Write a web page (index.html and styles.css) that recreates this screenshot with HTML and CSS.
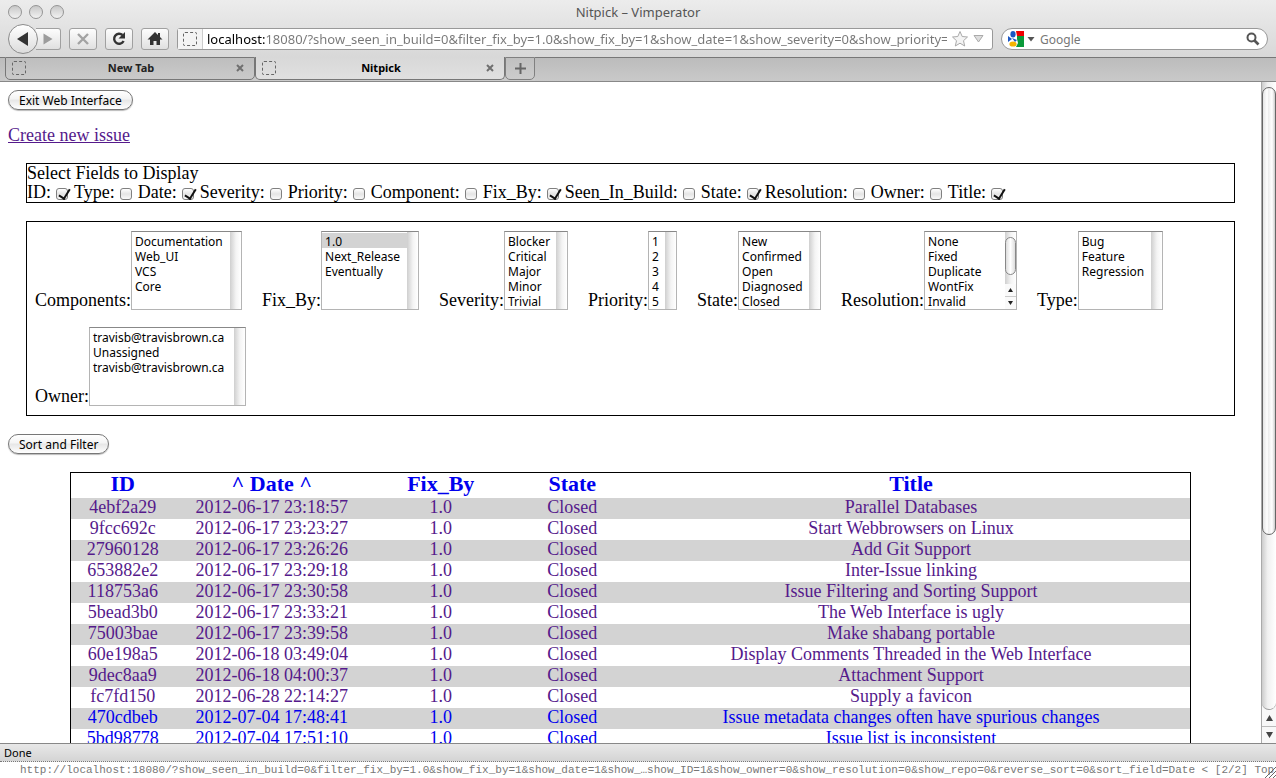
FILE: index.html
```html
<!DOCTYPE html>
<html lang="en">
<head>
<meta charset="utf-8">
<title>Nitpick</title>
<link rel="stylesheet" href="styles.css">
</head>
<body>
<header class="chrome">
  <div class="titlebar">
    <div class="lights"><span class="light"></span><span class="light"></span><span class="light"></span></div>
    <span class="window-title">Nitpick – Vimperator</span>
  </div>
  <div class="toolbar">
    <div class="history">
      <button class="back" aria-label="Back"><svg width="14" height="16" viewBox="0 0 14 16"><path d="M1 8 12 1v14z" fill="#333"/></svg></button>
      <button class="tool forward" aria-label="Forward"><svg width="10" height="12" viewBox="0 0 10 12"><path d="M9.500 6 .5 .5v11z" fill="#9c9c9c"/></svg></button>
    </div>
    <button class="tool" aria-label="Stop"><svg width="14" height="14" viewBox="0 0 14 14"><path d="M2 2 12 12M12 2 2 12" stroke="#a3a3a3" stroke-width="2.400"/></svg></button>
    <button class="tool" aria-label="Reload"><svg width="16" height="16" viewBox="0 0 16 16"><path d="M11.500 4A5 5 0 1 0 12.600 10" fill="none" stroke="#333" stroke-width="2.400"/><path d="M14 1v6.500H7.500z" fill="#333"/></svg></button>
    <button class="tool" aria-label="Home"><svg width="16" height="16" viewBox="0 0 16 16"><path d="M8 1 .5 8.500H3V14h3.500v-4h3v4H13V8.500h2.500L13 6V2h-2v2z" fill="#333"/></svg></button>
    <div class="address">
      <span class="site"><span class="favicon"></span></span>
      <input class="url" type="text" aria-label="Address" value="localhost:18080/?show_seen_in_build=0&amp;filter_fix_by=1.0&amp;show_fix_by=1&amp;show_date=1&amp;show_severity=0&amp;show_priority=0&amp;show_component=0">
      <svg width="18" height="18" viewBox="0 0 18 18"><path d="M9 1.500l2.200 5 5.300.5-4 3.700 1.200 5.300L9 13.200 4.300 16l1.200-5.300-4-3.700 5.300-.5z" fill="#f4f4f4" stroke="#aaa"/></svg>
      <svg width="11" height="8" viewBox="0 0 11 8"><path d="M1 .5h9L5.500 7z" fill="#ddd" stroke="#aaa"/></svg>
    </div>
    <div class="search">
      <svg width="17" height="16" viewBox="0 0 17 16"><path d="M8 0h8v5H9z" fill="#f00000"/><path d="M9 5h7v11H8l2-4-1-4z" fill="#0a9a3a"/><path d="M0 5l4 3-4 3z" fill="#1a56c4"/><ellipse cx="5" cy="3.200" rx="2.600" ry="3.200" fill="#1a56c4"/><path d="M4 7l5 2-2 2z" fill="#1a56c4"/><ellipse cx="5" cy="13" rx="3.600" ry="2.600" fill="#f5b400"/></svg>
      <svg width="8" height="5" viewBox="0 0 8 5"><path d="M.5 0h7L4 4.500z" fill="#555"/></svg>
      <input class="query" type="text" placeholder="Google" aria-label="Search">
      <svg width="14" height="14" viewBox="0 0 14 14"><circle cx="5.500" cy="5.500" r="4" fill="none" stroke="#555" stroke-width="2"/><path d="M8.500 8.500l4 4" stroke="#555" stroke-width="2.600"/></svg>
    </div>
  </div>
  <nav class="tabs">
    <div class="edge"></div>
    <div class="tab"><span class="favicon"></span><span class="tab-name">New Tab</span><button class="close" aria-label="Close New Tab"><svg width="8" height="8" viewBox="0 0 8 8"><path d="M1 1l6 6M7 1 1 7" stroke="#707070" stroke-width="2"/></svg></button></div>
    <div class="tab current"><span class="favicon"></span><span class="tab-name">Nitpick</span><button class="close" aria-label="Close Nitpick"><svg width="8" height="8" viewBox="0 0 8 8"><path d="M1 1l6 6M7 1 1 7" stroke="#707070" stroke-width="2"/></svg></button></div>
    <button class="new-tab" aria-label="Open a new tab"><svg width="11" height="11" viewBox="0 0 11 11"><path d="M5.500 0v11M0 5.500h11" stroke="#666" stroke-width="2"/></svg></button>
    <div class="rest"></div>
  </nav>
</header>

<div class="viewport">
  <main class="page">
    <button class="pill">Exit Web Interface</button>
    <a class="create" href="#new">Create new issue</a>
    <form class="filters">
      <fieldset class="fields">
        <div>Select Fields to Display</div>
        <div class="checks">
          <label>ID: <input type="checkbox" checked></label>
          <label>Type: <input type="checkbox"></label>
          <label>Date: <input type="checkbox" checked></label>
          <label>Severity: <input type="checkbox"></label>
          <label>Priority: <input type="checkbox"></label>
          <label>Component: <input type="checkbox"></label>
          <label>Fix_By: <input type="checkbox" checked></label>
          <label>Seen_In_Build: <input type="checkbox"></label>
          <label>State: <input type="checkbox" checked></label>
          <label>Resolution: <input type="checkbox"></label>
          <label>Owner: <input type="checkbox"></label>
          <label>Title: <input type="checkbox" checked></label>
        </div>
      </fieldset>
      <fieldset class="lists">
        <label>Components:<select class="w-component" multiple size="5"><option>Documentation</option><option>Web_UI</option><option>VCS</option><option>Core</option></select></label>
        <label>Fix_By:<select class="w-fix" multiple size="5"><option selected>1.0</option><option>Next_Release</option><option>Eventually</option></select></label>
        <label>Severity:<select class="w-severity" multiple size="5"><option>Blocker</option><option>Critical</option><option>Major</option><option>Minor</option><option>Trivial</option></select></label>
        <label>Priority:<select class="w-priority" multiple size="5"><option>1</option><option>2</option><option>3</option><option>4</option><option>5</option></select></label>
        <label>State:<select class="w-state" multiple size="5"><option>New</option><option>Confirmed</option><option>Open</option><option>Diagnosed</option><option>Closed</option></select></label>
        <label class="scrolling">Resolution:<select class="w-resolution" multiple size="5"><option>None</option><option>Fixed</option><option>Duplicate</option><option>WontFix</option><option>Invalid</option></select>
          <span class="mini-bar"><span class="mini-thumb"></span><svg width="11" height="25" viewBox="0 0 11 25"><path d="M0 0h11v25H0z" fill="#fafafa"/><path d="M0 12.500h11" stroke="#ccc"/><path d="M3 8h5L5.500 4zM3 17h5l-2.500 4z" fill="#222"/></svg></span></label>
        <label>Type:<select class="w-type" multiple size="5"><option>Bug</option><option>Feature</option><option>Regression</option></select></label>
        <label>Owner:<select class="w-owner" multiple size="5"><option>travisb@travisbrown.ca</option><option>Unassigned</option><option>travisb@travisbrown.ca</option></select></label>
      </fieldset>
      <button class="pill" type="button">Sort and Filter</button>
    </form>
    <table class="issues">
      <thead>
        <tr><th class="c-id"><a href="#id">ID</a></th><th class="c-date"><a href="#date">^ Date ^</a></th><th class="c-fix"><a href="#fix">Fix_By</a></th><th class="c-state"><a href="#state">State</a></th><th><a href="#title">Title</a></th></tr>
      </thead>
      <tbody>
        <tr class="seen"><td><a href="#1">4ebf2a29</a></td><td><a href="#1">2012-06-17 23:18:57</a></td><td><a href="#1">1.0</a></td><td><a href="#1">Closed</a></td><td><a href="#1">Parallel Databases</a></td></tr>
        <tr class="seen"><td><a href="#2">9fcc692c</a></td><td><a href="#2">2012-06-17 23:23:27</a></td><td><a href="#2">1.0</a></td><td><a href="#2">Closed</a></td><td><a href="#2">Start Webbrowsers on Linux</a></td></tr>
        <tr class="seen"><td><a href="#3">27960128</a></td><td><a href="#3">2012-06-17 23:26:26</a></td><td><a href="#3">1.0</a></td><td><a href="#3">Closed</a></td><td><a href="#3">Add Git Support</a></td></tr>
        <tr class="seen"><td><a href="#4">653882e2</a></td><td><a href="#4">2012-06-17 23:29:18</a></td><td><a href="#4">1.0</a></td><td><a href="#4">Closed</a></td><td><a href="#4">Inter-Issue linking</a></td></tr>
        <tr class="seen"><td><a href="#5">118753a6</a></td><td><a href="#5">2012-06-17 23:30:58</a></td><td><a href="#5">1.0</a></td><td><a href="#5">Closed</a></td><td><a href="#5">Issue Filtering and Sorting Support</a></td></tr>
        <tr class="seen"><td><a href="#6">5bead3b0</a></td><td><a href="#6">2012-06-17 23:33:21</a></td><td><a href="#6">1.0</a></td><td><a href="#6">Closed</a></td><td><a href="#6">The Web Interface is ugly</a></td></tr>
        <tr class="seen"><td><a href="#7">75003bae</a></td><td><a href="#7">2012-06-17 23:39:58</a></td><td><a href="#7">1.0</a></td><td><a href="#7">Closed</a></td><td><a href="#7">Make shabang portable</a></td></tr>
        <tr class="seen"><td><a href="#8">60e198a5</a></td><td><a href="#8">2012-06-18 03:49:04</a></td><td><a href="#8">1.0</a></td><td><a href="#8">Closed</a></td><td><a href="#8">Display Comments Threaded in the Web Interface</a></td></tr>
        <tr class="seen"><td><a href="#9">9dec8aa9</a></td><td><a href="#9">2012-06-18 04:00:37</a></td><td><a href="#9">1.0</a></td><td><a href="#9">Closed</a></td><td><a href="#9">Attachment Support</a></td></tr>
        <tr class="seen"><td><a href="#10">fc7fd150</a></td><td><a href="#10">2012-06-28 22:14:27</a></td><td><a href="#10">1.0</a></td><td><a href="#10">Closed</a></td><td><a href="#10">Supply a favicon</a></td></tr>
        <tr><td><a href="#11">470cdbeb</a></td><td><a href="#11">2012-07-04 17:48:41</a></td><td><a href="#11">1.0</a></td><td><a href="#11">Closed</a></td><td><a href="#11">Issue metadata changes often have spurious changes</a></td></tr>
        <tr><td><a href="#12">5bd98778</a></td><td><a href="#12">2012-07-04 17:51:10</a></td><td><a href="#12">1.0</a></td><td><a href="#12">Closed</a></td><td><a href="#12">Issue list is inconsistent</a></td></tr>
      </tbody>
    </table>
  </main>
  <div class="scrollbar">
    <div class="track"><div class="thumb"></div></div>
    <svg width="15" height="33" viewBox="0 0 15 33"><path d="M0 0h15v33H0z" fill="#f8f8f8"/><path d="M0 16.500h15" stroke="#bbb"/><path d="M4 11h7L7.500 5zM4 22h7l-3.500 6z" fill="#444"/></svg>
  </div>
</div>

<footer>
  <div class="status">Done</div>
  <div class="command"><span>http://localhost:18080/?show_seen_in_build=0&amp;filter_fix_by=1.0&amp;show_fix_by=1&amp;show_date=1&amp;show_…show_ID=1&amp;show_owner=0&amp;show_resolution=0&amp;show_repo=0&amp;reverse_sort=0&amp;sort_field=Date &lt; [2/2] Top</span>
    <svg class="grip" width="12" height="12" viewBox="0 0 12 12"><path d="M1 12 12 1M5 12l7-7M9 12l3-3" stroke="#666"/></svg></div>
</footer>
</body>
</html>
```
FILE: styles.css
```css
* { box-sizing: border-box; }
body {
  margin: 0;
  height: 100vh;
  display: flex;
  flex-direction: column;
  overflow: hidden;
  background: #fff;
  color: #000;
  font: 18px/19px "Liberation Serif", serif;
}
svg { display: block; flex: none; }
button, input, select { font: 12px/15px "Noto Sans", sans-serif; color: #000; }
button { padding: 0; border: 0; background: none; }

/* window frame */
.chrome {
  flex: none;
  background: linear-gradient(#ececec, #d8d8d8 57px);
  font: 12px/16px "Noto Sans", sans-serif;
}
.titlebar {
  display: grid;
  grid-template-columns: 1fr auto 1fr;
  align-items: center;
  height: 23px;
  padding: 0 8px;
}
.lights { display: flex; gap: 7px; }
.light {
  width: 14px;
  height: 14px;
  border: 1px solid #959595;
  border-radius: 50%;
  background: linear-gradient(#c8c8c8, #f2f2f2);
}
.window-title { color: #555; font-size: 13px; }
.toolbar {
  display: flex;
  align-items: center;
  gap: 8px;
  height: 34px;
  padding: 0 8px 2px;
}
.history { display: flex; align-items: center; }
.back {
  display: grid;
  place-items: center;
  width: 30px;
  height: 30px;
  border: 1px solid #8c8c8c;
  border-radius: 50%;
  background: linear-gradient(#fff, #dcdcdc);
  z-index: 1;
}
.tool {
  display: grid;
  place-items: center;
  flex: none;
  width: 28px;
  height: 22px;
  border: 1px solid #a0a0a0;
  border-radius: 3px;
  background: linear-gradient(#fdfdfd, #e0e0e0);
}
.forward { width: 25px; margin-left: -2px; border-left: 0; border-radius: 0 3px 3px 0; }
.address {
  flex: 1;
  display: flex;
  align-items: center;
  height: 22px;
  padding-right: 8px;
  gap: 4px;
  border: 1px solid #999;
  border-radius: 3px;
  background: #fff;
}
.site {
  display: grid;
  place-items: center;
  width: 25px;
  height: 20px;
  border-right: 1px solid #ccc;
  background: #f4f4f4;
}
.favicon { flex: none; width: 14px; height: 14px; border: 1px dashed #666; border-radius: 2px; }
.url {
  flex: 1;
  min-width: 0;
  height: 18px;
  padding: 0;
  border: 0;
  font-size: 13px;
  color: transparent;
  background: linear-gradient(90deg, #000 58px, #777 58px);
  -webkit-background-clip: text;
  background-clip: text;
}
.search {
  flex: none;
  display: flex;
  align-items: center;
  gap: 2px;
  width: 267px;
  height: 22px;
  padding: 0 7px 0 6px;
  border: 1px solid #999;
  border-radius: 11px;
  background: #fff;
}
.query { flex: 1; min-width: 0; padding: 0 3px; border: 0; background: none; font-size: 12px; }
.query::placeholder { color: #777; }

.tabs {
  display: flex;
  align-items: flex-start;
  height: 25px;
  border-bottom: 1px solid #888;
  background: #cbcbcb;
}
.edge, .rest { height: 24px; border-top: 1px solid #777; background: linear-gradient(#bcbcbc, #c9c9c9); }
.edge { width: 5px; }
.rest { flex: 1; }
.tab {
  display: flex;
  align-items: center;
  width: 250px;
  height: 23px;
  padding: 0 10px 2px 6px;
  border: 1px solid #777;
  border-radius: 0 0 5px 5px;
  background: linear-gradient(#bebebe, #cacaca);
  color: #222;
}
.current { border-top: 0; padding-bottom: 0; background: linear-gradient(#d8d8d8, #e0e0e0); color: #000; }
.tab-name { flex: 1; text-align: center; font-size: 11px; font-weight: bold; }
.new-tab {
  display: grid;
  place-items: center;
  width: 30px;
  height: 23px;
  border: 1px solid #808080;
  border-radius: 0 0 5px 5px;
  background: linear-gradient(#c0c0c0, #cccccc);
}

/* page */
.viewport { flex: 1; min-height: 0; display: flex; }
.page { flex: 1; min-width: 0; padding: 8px; overflow: hidden; }
.pill {
  display: block;
  height: 20px;
  padding: 0 10px;
  border: 1px solid #777;
  border-radius: 10px;
  background: linear-gradient(#fff, #f4f4f4 45%, #e6e6e6 50%, #fff);
  box-shadow: 0 1px 1px #bbb;
}
.create { display: table; margin: 16px 0 18px; color: #551a8b; }
fieldset { min-width: 0; margin: 0 18px 18px; padding: 0; border: 1px solid #000; }
.checks { display: flex; flex-wrap: wrap; gap: 0 6px; }
.checks label { display: flex; align-items: center; gap: 5px; }
.checks input {
  appearance: none;
  width: 12px;
  height: 12px;
  margin: 2px 0 0;
  border: 1px solid #808080;
  border-radius: 3px;
  background: linear-gradient(#fff, #e4e4e4 50%, #fafafa);
}
.checks input:checked::after {
  content: "";
  display: block;
  width: 5px;
  height: 10px;
  margin: -2px 0 0 4px;
  border: solid #111;
  border-width: 0 2px 2px 0;
  transform: rotate(32deg);
}
.lists { display: flex; flex-wrap: wrap; gap: 17px 20px; padding: 9px 8px; }
.lists label { display: flex; align-items: flex-end; }
.scrolling { position: relative; }
select {
  appearance: none;
  height: 79px;
  margin: 0;
  padding: 1px 11px 1px 0;
  border: 1px solid #b4b4b4;
  border-top-color: #888;
  border-radius: 0;
  outline: 0;
  background: linear-gradient(90deg, #cfcfcf, #f4f4f4 6px, #fff) right / 11px 100% no-repeat #fff;
  scrollbar-width: none;
}
option { height: 15px; min-height: 15px; padding: 0 3px; line-height: 15px; }
option:checked { background: linear-gradient(#d3d3d3, #d3d3d3); color: #000; }
.w-component { width: 111px; }
.w-fix { width: 98px; }
.w-severity { width: 64px; }
.w-priority { width: 29px; }
.w-state { width: 83px; }
.w-resolution { width: 93px; }
.w-type { width: 85px; }
.w-owner { width: 157px; }
.mini-bar {
  position: absolute;
  right: 1px;
  bottom: 1px;
  display: flex;
  flex-direction: column;
  justify-content: space-between;
  width: 11px;
  height: 77px;
  padding-top: 5px;
}
.mini-thumb {
  height: 38px;
  border: 1px solid #888;
  border-radius: 6px;
  background: linear-gradient(90deg, #ddd, #fff 50%, #ddd);
}

.issues {
  width: 90%;
  margin: 18px auto 0;
  table-layout: fixed;
  border: 1px solid #000;
  border-spacing: 0;
  text-align: center;
}
.issues th, .issues td { padding: 0; }
.issues th { height: 25px; font-size: 22px; line-height: 22px; vertical-align: top; }
.issues td { height: 21px; line-height: 19px; vertical-align: top; }
.issues a { color: #0000ee; text-decoration: none; }
.issues .seen a { color: #551a8b; }
.issues tbody tr:nth-child(odd) { background: #d3d3d3; }
.c-id { width: 103px; }
.c-date { width: 195px; }
.c-fix { width: 143px; }
.c-state { width: 120px; }

.scrollbar {
  flex: none;
  display: flex;
  flex-direction: column;
  width: 15px;
  border-left: 1px solid #aaa;
  background: #f8f8f8;
}
.track {
  flex: 1;
  padding-top: 5px;
  border-bottom: 1px solid #999;
  border-radius: 0 0 7px 7px;
  background: linear-gradient(90deg, #ccc, #f0f0f0 40%, #fff);
}
.thumb {
  height: 72%;
  border: 1px solid #666;
  border-radius: 7px;
  background: linear-gradient(90deg, #e4e4e4, #fff 35%, #eee 45%, #fff 75%, #ccc);
}

/* status lines */
footer { flex: none; }
.status {
  height: 19px;
  padding-left: 4px;
  border-top: 1px solid #888;
  border-bottom: 1px dotted #777;
  background: linear-gradient(#e8e8e8, #d4d4d4);
  font: 11px/18px "Noto Sans", sans-serif;
}
.command {
  position: relative;
  height: 16px;
  padding-left: 20px;
  overflow: hidden;
  color: #777;
  font: 11px/16px "Liberation Mono", monospace;
  white-space: nowrap;
}
.grip { position: absolute; right: 0; bottom: 0; }
```
